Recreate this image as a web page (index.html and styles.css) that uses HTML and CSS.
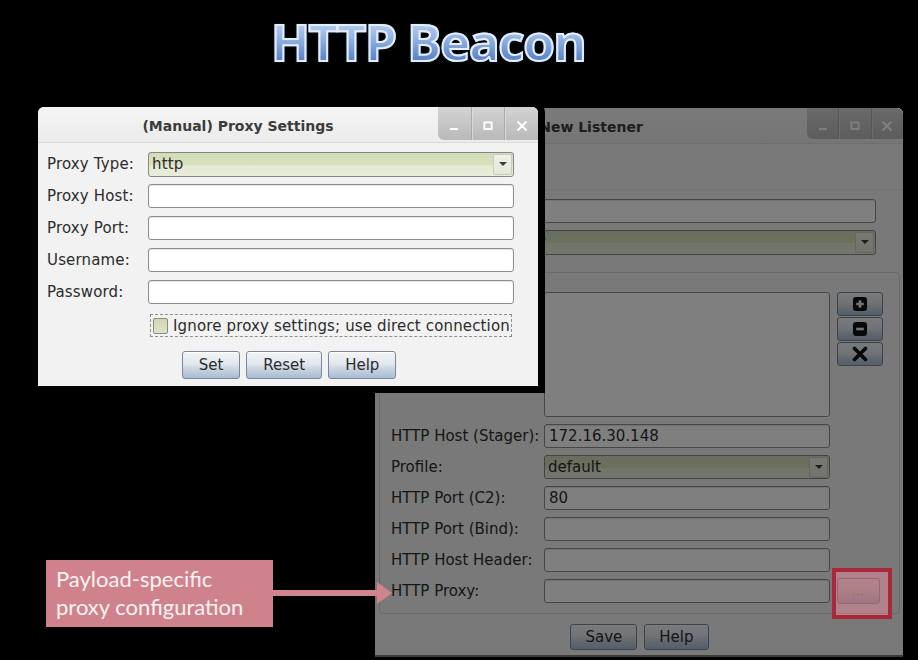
FILE: index.html
```html
<!DOCTYPE html>
<html lang="en">
<head>
<meta charset="utf-8">
<title>HTTP Beacon</title>
<link rel="stylesheet" href="styles.css">
</head>
<body>
<div class="slide">
  <header class="slide-head">
    <h1 class="slide-title">HTTP Beacon</h1>
  </header>

  <!-- background window (dimmed) -->
  <section class="win listener">
    <div class="titlebar">
      <div class="title">New Listener</div>
      <div class="wm-buttons small">
        <span class="wm"><svg width="10" height="10" viewBox="0 0 10 10"><rect x="1" y="7" width="8" height="2" fill="#fff"/></svg></span>
        <span class="wm"><svg width="10" height="10" viewBox="0 0 10 10"><rect x="1.4" y="1.4" width="7.2" height="6.6" fill="none" stroke="#fff" stroke-width="1.8"/></svg></span>
        <span class="wm"><svg width="12" height="12" viewBox="0 0 12 12"><path d="M1.5 1.5l9 9M10.5 1.5l-9 9" stroke="#fff" stroke-width="2"/></svg></span>
      </div>
    </div>
    <div class="lbody">
      <p class="desc">Create a listener.</p>
      <div class="top-form">
        <label>Name:</label>
        <div class="field"></div>
        <label>Payload:</label>
        <div class="combo"><span class="val">Beacon HTTP</span><span class="arrow"></span></div>
      </div>
      <div class="group">
        <div class="gform">
          <label class="top">HTTP Hosts:</label>
          <div class="listbox"></div>
          <div class="tools">
            <button class="tool"><svg width="16" height="16" viewBox="0 0 16 16"><rect x="1" y="1" width="14" height="14" rx="3" fill="#111"/><path d="M8 4.2v7.6M4.2 8h7.6" stroke="#e8e8e8" stroke-width="2.6"/></svg></button>
            <button class="tool"><svg width="16" height="16" viewBox="0 0 16 16"><rect x="1" y="1" width="14" height="14" rx="3" fill="#111"/><path d="M4.2 8h7.6" stroke="#e8e8e8" stroke-width="2.6"/></svg></button>
            <button class="tool"><svg width="16" height="16" viewBox="0 0 16 16"><path d="M2.5 2.5l11 11M13.5 2.5l-11 11" stroke="#111" stroke-width="3.6" stroke-linecap="round"/></svg></button>
          </div>
          <label>HTTP Host (Stager):</label>
          <div class="field">172.16.30.148</div>
          <span></span>
          <label>Profile:</label>
          <div class="combo"><span class="val">default</span><span class="arrow"></span></div>
          <span></span>
          <label>HTTP Port (C2):</label>
          <div class="field">80</div>
          <span></span>
          <label>HTTP Port (Bind):</label>
          <div class="field"></div>
          <span></span>
          <label>HTTP Host Header:</label>
          <div class="field"></div>
          <span></span>
          <label>HTTP Proxy:</label>
          <div class="field"></div>
          <button class="btn dots">...</button>
        </div>
      </div>
      <div class="actions">
        <button class="btn">Save</button>
        <button class="btn">Help</button>
      </div>
    </div>
  </section>

  <!-- front dialog -->
  <section class="win proxy">
    <div class="titlebar">
      <div class="title">(Manual) Proxy Settings</div>
      <div class="wm-buttons">
        <span class="wm"><svg width="10" height="10" viewBox="0 0 10 10"><rect x="1" y="7" width="8" height="2" fill="#fff"/></svg></span>
        <span class="wm"><svg width="10" height="10" viewBox="0 0 10 10"><rect x="1.4" y="1.4" width="7.2" height="6.6" fill="none" stroke="#fff" stroke-width="1.8"/></svg></span>
        <span class="wm"><svg width="12" height="12" viewBox="0 0 12 12"><path d="M1.5 1.5l9 9M10.5 1.5l-9 9" stroke="#fff" stroke-width="2"/></svg></span>
      </div>
    </div>
    <div class="pbody">
      <div class="pform">
        <label>Proxy Type:</label>
        <div class="combo"><span class="val">http</span><span class="arrow"></span></div>
        <label>Proxy Host:</label>
        <div class="field"></div>
        <label>Proxy Port:</label>
        <div class="field"></div>
        <label>Username:</label>
        <div class="field"></div>
        <label>Password:</label>
        <div class="field"></div>
      </div>
      <div class="check-row">
        <span class="checkbox"></span>
        <span>Ignore proxy settings; use direct connection</span>
      </div>
      <div class="btn-row">
        <button class="btn">Set</button>
        <button class="btn">Reset</button>
        <button class="btn">Help</button>
      </div>
    </div>
  </section>

  <!-- annotations -->
  <div class="highlight"></div>
  <div class="callout">Payload-specific<br>proxy configuration</div>
  <svg class="callout-arrow" width="120" height="22" viewBox="0 0 120 22">
    <rect x="0" y="8" width="106" height="6" fill="#d0848d"/>
    <polygon points="104,0 119,11 104,22" fill="#d0848d"/>
  </svg>
</div>
</body>
</html>
```

FILE: styles.css
```css
* { box-sizing: border-box; }

html, body {
  margin: 0;
  padding: 0;
  background: #000;
}

.slide {
  position: relative;
  width: 918px;
  height: 660px;
  overflow: hidden;
  background: #000;
}

/* ---------- slide title ---------- */
.slide-head {
  padding: 15px 0 0 271px;
}

.slide-title {
  display: inline-block;
  margin: 0;
  font-family: "Open Sans", sans-serif;
  font-weight: 700;
  font-size: 51px;
  line-height: 52px;
  letter-spacing: -1.4px;
  background: linear-gradient(#c8d9f5 0%, #9ab8e6 40%, #6890d0 75%, #4a76bd 100%);
  -webkit-background-clip: text;
  background-clip: text;
  color: transparent;
  -webkit-text-fill-color: transparent;
  -webkit-text-stroke: 2px #e6edf7;
  filter: drop-shadow(0 0 1px #14213a) drop-shadow(0 1px 1px #000);
}

/* ---------- generic window ---------- */
.win {
  position: absolute;
  display: flex;
  flex-direction: column;
  background: #f2f2f2;
  border-radius: 6px 6px 0 0;
  font-family: "DejaVu Sans", "Liberation Sans", sans-serif;
  font-size: 15px;
  color: #2c2c2c;
}

.titlebar {
  flex: none;
  display: flex;
  height: 36px;
  background: linear-gradient(#f5f5f5, #ebebeb);
  border-bottom: 1px solid #dadada;
  border-radius: 6px 6px 0 0;
}

.title {
  flex: 1;
  display: flex;
  align-items: center;
  justify-content: center;
  padding-top: 3px;
  font-weight: 700;
  font-size: 14px;
  color: #3b3b3b;
}

.wm-buttons {
  flex: none;
  display: flex;
  width: 100px;
  height: 33px;
  background: linear-gradient(#d3d3d3, #b9b9b9);
  border-radius: 0 6px 0 6px;
}

.wm-buttons.small {
  width: 96px;
  height: 31px;
}

.wm {
  flex: 1;
  display: flex;
  align-items: center;
  justify-content: center;
  padding-top: 4px;
  border-left: 1px solid #aaaaaa;
  box-shadow: inset 1px 0 0 #d8d8d8;
}

.wm:first-child {
  border-left: none;
  box-shadow: none;
}

/* form controls */
label {
  white-space: nowrap;
}

.field {
  height: 24px;
  background: #fff;
  border: 1px solid #8d8d8d;
  border-radius: 3px;
  box-shadow: inset 0 1px 1px rgba(0, 0, 0, 0.12);
  padding: 0 4px;
  line-height: 22px;
  white-space: nowrap;
  overflow: hidden;
}

.combo {
  display: flex;
  align-items: center;
  height: 25px;
  border: 1px solid #868686;
  border-radius: 3px;
  background: linear-gradient(#d3dcb8 0%, #d8e0be 52%, #e4ead2 53%, #e8edda 100%);
  padding-left: 3px;
  white-space: nowrap;
  overflow: hidden;
}

.combo .val {
  flex: 1;
}

.combo .arrow {
  flex: none;
  display: flex;
  align-items: center;
  justify-content: center;
  width: 19px;
  height: 21px;
  margin-right: 1px;
  border: 1px solid #c9cdbb;
  border-radius: 2px;
  background: linear-gradient(#eef1e6, #e4e8d8);
}

.combo .arrow::after {
  content: "";
  border-left: 4px solid transparent;
  border-right: 4px solid transparent;
  border-top: 4px solid #3a3a3a;
}

.btn {
  height: 28px;
  padding: 0 16px;
  font: inherit;
  color: #2c2c2c;
  border: 1px solid #7b8797;
  border-radius: 3px;
  background: linear-gradient(#f2f4f7 0%, #e3e8ee 45%, #c3d0df 70%, #a9bcd3 100%);
  box-shadow: inset 0 1px 0 #fff;
}

/* ---------- front proxy dialog ---------- */
.proxy {
  left: 38px;
  top: 107px;
  width: 500px;
  height: 279px;
  box-shadow: 0 0 0 7px #000;
  z-index: 2;
}

.pbody {
  display: flex;
  flex-direction: column;
  padding: 9px 0 0 9px;
  letter-spacing: 0.15px;
}

.pform {
  display: grid;
  grid-template-columns: 101px 366px;
  grid-auto-rows: 24px;
  row-gap: 8px;
  align-items: center;
}

.pform .combo {
  height: 25px;
}

.check-row {
  display: flex;
  align-items: center;
  gap: 5px;
  width: 362px;
  height: 23px;
  margin: 10px 0 0 103px;
  padding-left: 2px;
  border: 1px dashed #8e8e8e;
  white-space: nowrap;
}

.checkbox {
  flex: none;
  width: 15px;
  height: 16px;
  border: 1px solid #8b8d7a;
  border-radius: 2px;
  background: linear-gradient(#d3d7b6, #dfe2c8);
}

.btn-row {
  display: flex;
  justify-content: center;
  gap: 6px;
  margin: 14px 0 0 -7px;
}

/* ---------- background listener window ---------- */
.listener {
  left: 375px;
  top: 108px;
  width: 528px;
  height: 549px;
  z-index: 1;
}

.listener::after {
  content: "";
  position: absolute;
  inset: 0;
  background: rgba(0, 0, 0, 0.5);
  border-radius: 6px 6px 0 0;
  border-bottom: 2px solid rgba(0, 0, 0, 0.5);
}

.lbody {
  display: flex;
  flex-direction: column;
  padding: 0 3px 0 4px;
}

.desc {
  height: 46px;
  margin: 0 -3px 0 -4px;
  padding: 14px 0 0 16px;
  border-bottom: 1px solid #e6e6e6;
}

.top-form {
  display: grid;
  grid-template-columns: 64px 433px;
  grid-auto-rows: 24px;
  row-gap: 7px;
  align-items: center;
  margin-top: 9px;
}

.group {
  margin-top: 18px;
  height: 342px;
  border: 1px solid #d2d2d2;
  border-radius: 4px;
  padding: 19px 0 0 11px;
}

.gform {
  display: grid;
  grid-template-columns: 153px 286px 53px;
  grid-template-rows: 125px;
  grid-auto-rows: 24px;
  row-gap: 7px;
  align-items: center;
}

.gform .combo {
  height: 24px;
}

.gform label.top {
  align-self: start;
  padding-top: 4px;
}

.listbox {
  align-self: stretch;
  background: #fff;
  border: 1px solid #8d8d8d;
  border-radius: 3px;
}

.tools {
  align-self: start;
  justify-self: end;
  display: flex;
  flex-direction: column;
  gap: 1px;
  width: 46px;
}

.tool {
  height: 24px;
  padding: 0;
  display: flex;
  align-items: center;
  justify-content: center;
  border: 1px solid #7b8797;
  border-radius: 3px;
  background: linear-gradient(#f2f4f7 0%, #e3e8ee 45%, #c3d0df 70%, #a9bcd3 100%);
}

.dots {
  justify-self: end;
  align-self: center;
  width: 43px;
  height: 26px;
  padding: 0;
  margin-right: 3px;
  font-size: 11px;
  color: #777;
  letter-spacing: 1px;
}

.actions {
  display: flex;
  justify-content: center;
  gap: 7px;
  margin-top: 10px;
}

.actions .btn {
  height: 26px;
  padding: 0 14px;
}

/* ---------- annotations ---------- */
.highlight {
  position: absolute;
  left: 832px;
  top: 568px;
  width: 60px;
  height: 51px;
  border: 4px solid #a9283b;
  background: rgba(236, 140, 156, 0.5);
  z-index: 3;
}

.callout {
  position: absolute;
  left: 46px;
  top: 560px;
  width: 227px;
  height: 67px;
  padding: 5px 0 0 10px;
  background: #cf828b;
  color: #fcf2f3;
  font-family: Lato, "Open Sans", sans-serif;
  font-size: 22px;
  line-height: 28px;
  z-index: 3;
}

.callout-arrow {
  position: absolute;
  left: 273px;
  top: 582px;
  z-index: 3;
}
```
